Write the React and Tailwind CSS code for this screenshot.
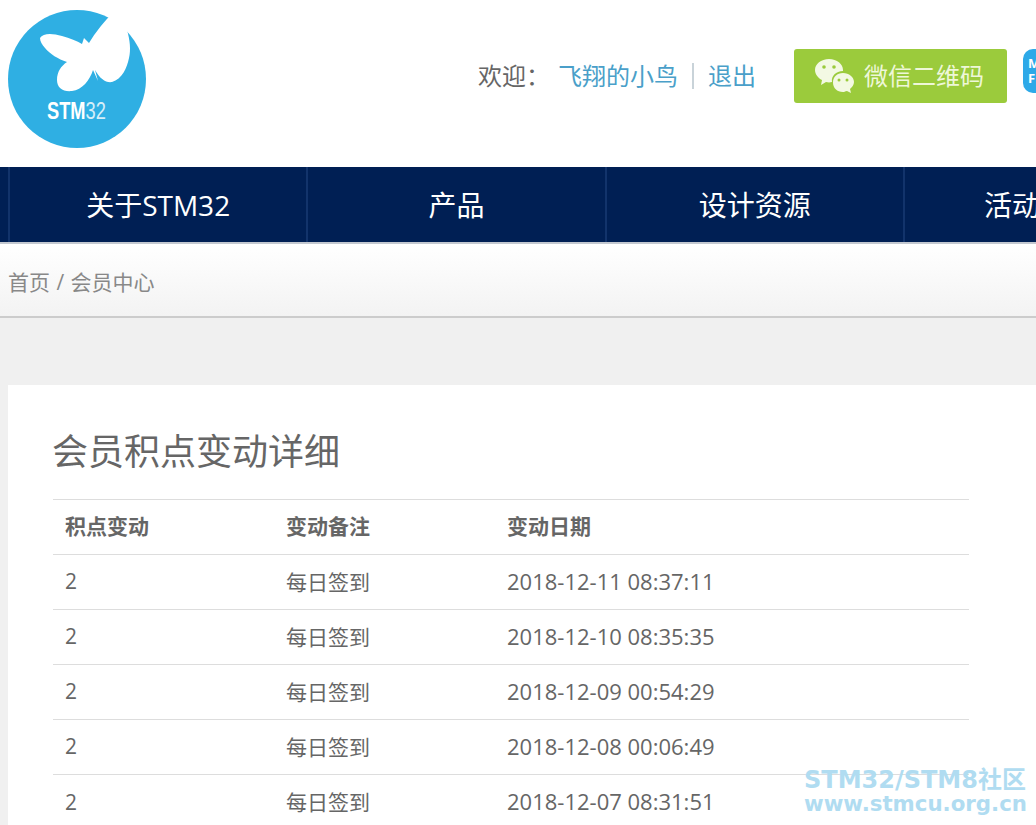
const font = { fontFamily: '"Open Sans", "Noto Sans CJK SC", sans-serif' }

const navItems = ['关于STM32', '产品', '设计资源']

const rows = [
  ['2', '每日签到', '2018-12-11 08:37:11'],
  ['2', '每日签到', '2018-12-10 08:35:35'],
  ['2', '每日签到', '2018-12-09 00:54:29'],
  ['2', '每日签到', '2018-12-08 00:06:49'],
  ['2', '每日签到', '2018-12-07 08:31:51'],
]

const Logo = () => (
  <div className="relative w-[138px] h-[138px] shrink-0 rounded-full bg-[#2fafe3]">
    <svg className="absolute left-0 top-0 overflow-visible" width="138" height="138" viewBox="8 10 138 138">
      {/* butterfly, the top wing runs out of the circle */}
      <path
        fill="#fff"
        d="M40 38 C43 33 52 33 62 36 C70 38 77 41 82 44 L84 38 L89 43 C95 33 105 20 114 12 L127 30 C130 40 131 50 129 58 C127 68 122 79 112 82 C106 83 100 79 95 70 L98 81 L93 70 C90 80 82 90 72 91 C63 92 57 88 57 80 C57 72 61 66 67 62 C58 59 50 54 45 48 C42 45 40 41 40 38 Z"
      />
    </svg>
    <span className="absolute left-[39px] top-[88px] origin-left scale-x-[0.76] whitespace-nowrap text-[24px] leading-[26px] text-white font-['Liberation_Sans',sans-serif]">
      <b>STM</b><span className="font-light opacity-80">32</span>
    </span>
  </div>
)

const WechatIcon = () => (
  <svg width="42" height="36" viewBox="0 0 42 36">
    <path fill="#f3f9e3" d="M15 1 C23 1 29 6 29 12 C29 12.500 29 13 29 13 C22 13 17 18 18 24 C16 24.500 14 24.500 12 24 L7 27 L8 22 C4 20 1 16 1 12 C1 6 7 1 15 1 Z" />
    <path fill="#f3f9e3" d="M29 15 C35 15 40 19 40 24 C40 27 38 29 36 31 L37 35 L33 33 C31 33.500 30 34 29 34 C23 34 19 30 19 24.500 C19 19 23 15 29 15 Z" />
    <circle cx="10" cy="9" r="1.800" fill="#9bcb3c" />
    <circle cx="20" cy="9" r="1.800" fill="#9bcb3c" />
    <circle cx="25" cy="22" r="1.500" fill="#9bcb3c" />
    <circle cx="33" cy="22" r="1.500" fill="#9bcb3c" />
  </svg>
)

export default function App() {
  return (
    <div className="relative w-[1036px] h-[825px] overflow-hidden bg-[#f0f0f0] text-[#666]" style={font}>
      {/* Header */}
      <header className="h-[167px] bg-white flex items-start">
        <div className="pl-2 pt-[10px]">
          <Logo />
        </div>
        <div className="ml-[332px] mt-[49px] flex items-center h-[54px] text-[24px] whitespace-nowrap">
          <span className="w-[80px] text-[#666]">欢迎：</span>
          <span className="text-[#4a9fc9]">飞翔的小鸟</span>
          <span className="ml-[14px] mr-[14px] w-[2px] h-[26px] bg-[#c9d3d9]"></span>
          <span className="text-[#4a9fc9]">退出</span>
          <div className="ml-[38px] w-[213px] h-[54px] shrink-0 rounded-[3px] bg-[#9bcb3c] flex items-center pl-[20px] gap-[8px] text-[#eef7d8]">
            <WechatIcon />
            <span>微信二维码</span>
          </div>
          <div className="ml-[16px] w-[44px] h-[44px] mb-[11px] shrink-0 rounded-[10px] bg-[#2da9e8] text-white text-[13px] leading-[15px] font-bold pl-[5px] pt-[7px]">
            M<br />F
          </div>
        </div>
      </header>

      {/* Nav */}
      <nav className="h-[77px] bg-[#001f54] border-b-2 border-[#c3c8d0] flex pl-2 text-white text-[28px]">
        {navItems.map((item) => (
          <div
            key={item}
            className="w-[298.3px] shrink-0 border-l-2 border-[#12336b] flex items-center justify-center whitespace-nowrap"
          >
            {item}
          </div>
        ))}
        <div className="w-[298.3px] shrink-0 border-l-2 border-[#12336b] flex items-center pl-[79px] whitespace-nowrap">
          活动
        </div>
      </nav>

      {/* Breadcrumb */}
      <div className="h-[74px] pl-2 pt-[6px] flex items-center border-b-2 border-[#ccc] bg-gradient-to-b from-white to-[#f3f3f3] text-[21px] text-[#888] [word-spacing:1px]">
        首页 / 会员中心
      </div>

      {/* Card */}
      <main className="mt-[67px] ml-2 bg-white h-[500px] pl-[45px] pt-[42px]">
        <h1 className="-ml-[1px] text-[36px] leading-[50px] text-[#666] font-normal">会员积点变动详细</h1>
        <table className="mt-[22px] w-[916px] text-[21px] table-fixed border-collapse">
          <thead>
            <tr className="h-[55px] border-t border-[#ddd]">
              <th className="w-[221px] pl-3 text-left font-bold">积点变动</th>
              <th className="w-[221px] pl-3 text-left font-bold">变动备注</th>
              <th className="pl-3 text-left font-bold">变动日期</th>
            </tr>
          </thead>
          <tbody>
            {rows.map((row) => (
              <tr key={row[2]} className="h-[55px] border-t border-[#ddd]">
                <td className="pl-3">{row[0]}</td>
                <td className="pl-3 pt-[1px]">{row[1]}</td>
                <td className="pl-3 pb-[2px] text-[22px]">{row[2]}</td>
              </tr>
            ))}
          </tbody>
        </table>
      </main>

      {/* Watermark */}
      <div className="absolute left-[804px] top-[768px] text-[#b0dcf1] font-bold font-['DejaVu_Sans','Noto_Sans_CJK_SC',sans-serif] whitespace-nowrap">
        <div className="text-[24px] leading-[25px]">STM32/STM8社区</div>
        <div className="text-[21.300px] leading-[22px]">www.stmcu.org.cn</div>
      </div>
    </div>
  )
}
